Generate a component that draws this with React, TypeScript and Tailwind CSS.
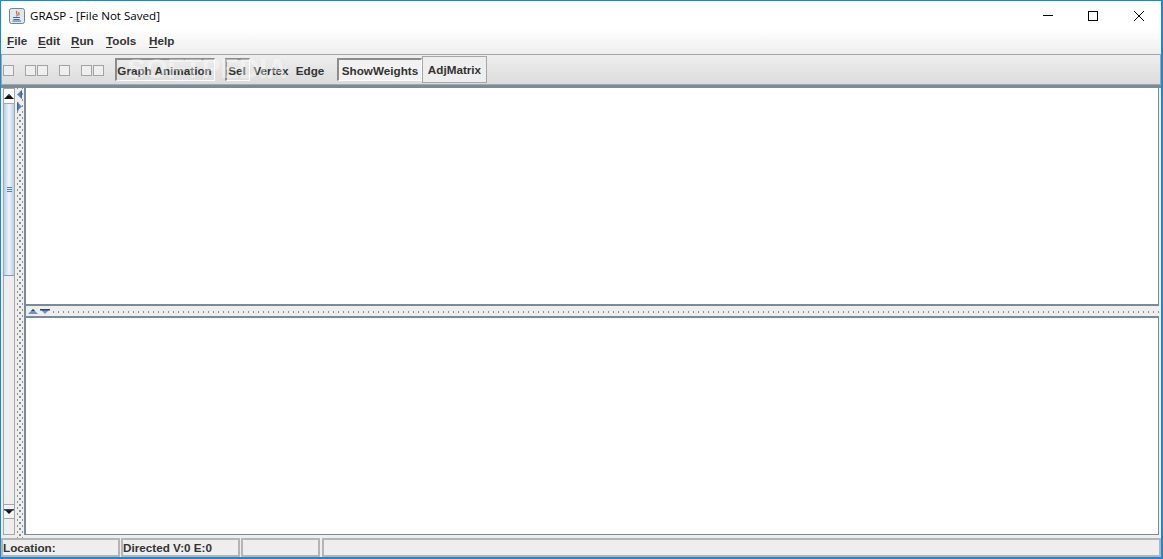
import React from "react";

const font = { fontFamily: '"Liberation Sans", Arial, sans-serif' };

function Box({ className = "" }: { className?: string }) {
  return <div className={"w-[11px] h-[11px] border border-[#a3a3a3] bg-[#efefef] " + className} />;
}

function Menu({ u, rest, className = "" }: { u: string; rest: string; className?: string }) {
  return (
    <span className={"text-[11.7px] font-bold text-[#333333] leading-none " + className}>
      <span className="underline underline-offset-2">{u}</span>
      {rest}
    </span>
  );
}

function Flat({ children, className = "" }: { children: React.ReactNode; className?: string }) {
  return (
    <div className={"h-[23px] flex items-center text-[11.7px] font-bold text-[#333333] " + className}>{children}</div>
  );
}

function Pressed({ children, className = "" }: { children: React.ReactNode; className?: string }) {
  return (
    <div
      className={
        "flex items-center justify-center text-[11.7px] font-bold text-[#333333] border-l-2 border-t-2 border-r border-b border-l-[#8c8c8c] border-t-[#8c8c8c] border-r-white border-b-white " +
        className
      }
    >
      {children}
    </div>
  );
}

function Tri({ dir, color }: { dir: "up" | "down" | "left" | "right"; color: string }) {
  const pts = {
    up: "0,5 5,0 10,5",
    down: "0,0 10,0 5,5",
    left: "5,0 5,9 0,4.5",
    right: "0,0 0,9 5,4.5",
  }[dir];
  const horizontal = dir === "up" || dir === "down";
  const w = horizontal ? 10 : 5;
  const h = horizontal ? 5 : 9;
  return (
    <svg width={w} height={h} viewBox={`0 0 ${w} ${h}`} className="block">
      <polygon points={pts} fill={color} />
      {dir === "down" && <rect x="0" y="0" width="10" height="1.5" fill="#2c4468" />}
      {dir === "up" && <polygon points="3,2 5,0 7,2" fill="#2c4468" />}
      {dir === "left" && <polygon points="5,0 5,9 3.5,7.5 3.5,1.5" fill="#2c4468" opacity="0.5" />}
      {dir === "right" && <rect x="0" y="0" width="1.5" height="9" fill="#2c4468" opacity="0.5" />}
    </svg>
  );
}

function Cell({ children, className = "" }: { children?: React.ReactNode; className?: string }) {
  return (
    <div
      className={
        "h-[19px] border-2 border-[#b5b5b5] bg-[#eeeeee] flex items-center pt-px text-[11.7px] font-bold text-[#333333] whitespace-nowrap " +
        className
      }
    >
      {children}
    </div>
  );
}

export default function App() {
  return (
    <div
      style={font}
      className="relative w-[1163px] h-[559px] overflow-hidden border border-[#1a87d9] border-b-2 border-r-2 bg-[#eeeeee] flex flex-col"
    >
      {/* title bar */}
      <div className="h-[29px] shrink-0 bg-white flex items-center pl-[8px]">
        <svg width="16" height="16" viewBox="0 0 16 16" className="block">
          <rect x="0.5" y="0.5" width="15" height="15" rx="2" fill="#dfe7f0" stroke="#6f8399" />
          <path d="M8 3 C6 5 10 6 7.5 8.5 M10 4 C9 5.5 11 6 9.5 7.5" stroke="#d9622b" strokeWidth="1.2" fill="none" />
          <path d="M4 9.5 H11 M4.5 11.5 H10.5 M3.5 13 H12" stroke="#3f6f9f" strokeWidth="1" fill="none" />
        </svg>
        <span
          className="ml-[5px] text-[11.6px] text-black whitespace-nowrap"
          style={{ fontFamily: '"Open Sans", sans-serif' }}
        >
          GRASP - [File Not Saved]
        </span>
        <div className="ml-auto flex items-center">
          <div className="w-[45px] flex justify-end pr-[18px]">
            <div className="w-[10px] h-px bg-black" />
          </div>
          <div className="w-[45px] flex justify-end pr-[18px]">
            <div className="w-[10px] h-[10px] border border-black" />
          </div>
          <div className="w-[45px] flex justify-end pr-[17px]">
            <svg width="10" height="10" viewBox="0 0 10 10" className="block">
              <path d="M0 0 L10 10 M10 0 L0 10" stroke="#000" strokeWidth="1" />
            </svg>
          </div>
        </div>
      </div>

      {/* menu bar */}
      <div className="h-[24px] shrink-0 bg-gradient-to-b from-white to-[#eeeeee] flex items-center pl-[6px] pb-[2px]">
        <Menu u="F" rest="ile" className="w-[31px]" />
        <Menu u="E" rest="dit" className="w-[33px]" />
        <Menu u="R" rest="un" className="w-[35px]" />
        <Menu u="T" rest="ools" className="w-[43px]" />
        <Menu u="H" rest="elp" />
      </div>

      {/* toolbar */}
      <div className="relative h-[31px] shrink-0 bg-gradient-to-b from-[#eeeeee] to-[#dcdcdc] border border-[#a6a6a6] flex items-center">
        <div className="flex items-center ml-[1px] mt-[1px]">
          <Box />
          <Box className="ml-[11px]" />
          <Box className="ml-[1px]" />
          <Box className="ml-[11px]" />
          <Box className="ml-[11px]" />
          <Box className="ml-[1px]" />
        </div>
        <Pressed className="ml-[11px] w-[100px] h-[23px] pt-px pr-[2px]">Graph Animation</Pressed>
        <Pressed className="ml-[10px] w-[25px] h-[23px] pt-px pr-[2px]">Sel</Pressed>
        <Flat className="w-[42px] justify-center pt-[2px]">Vertex</Flat>
        <Flat className="w-[36px] justify-center pt-[2px]">Edge</Flat>
        <Pressed className="ml-[9px] w-[85px] h-[23px] pt-px bg-[#f2f2f2]">ShowWeights</Pressed>
        <div className="w-[65px] h-[27px] flex items-center justify-center pt-px border border-[#a6a6a6] bg-[#eeeeee] text-[11.7px] font-bold text-[#333333]">
          AdjMatrix
        </div>
        <div className="absolute left-[125px] top-[0px] text-[28px] font-bold text-white/40 leading-none pointer-events-none whitespace-nowrap">
          SOFTPEDIA
        </div>
      </div>

      {/* main */}
      <div className="flex-1 min-h-0 flex flex-col">
        <div className="h-[3px] shrink-0 bg-[#7a8a99]" />
        <div className="flex-1 min-h-0 flex">
          {/* vertical scrollbar */}
          <div className="w-[2px] shrink-0" />
          <div className="w-[12px] shrink-0 flex flex-col border border-[#a6a6a6] bg-[#eeeeee] mb-[3px]">
            <div className="h-[15px] shrink-0 flex items-center justify-center border-b border-[#a6a6a6] bg-white">
              <Tri dir="up" color="#111111" />
            </div>
            <div className="h-[172px] shrink-0 flex items-center justify-center border-b border-[#7f9db9] bg-gradient-to-r from-[#b8cfe5] via-[#eef4fa] to-[#b8cfe5]">
              <div className="w-[5px] flex flex-col gap-px">
                <div className="h-px bg-[#4f7fb5]" />
                <div className="h-px bg-[#4f7fb5]" />
                <div className="h-px bg-[#4f7fb5]" />
              </div>
            </div>
            <div className="flex-1" />
            <div className="h-[15px] shrink-0 flex items-center justify-center border-y border-[#a6a6a6] bg-[#f4f4f4]">
              <Tri dir="down" color="#111111" />
            </div>
            <div className="h-[15px] shrink-0" />
          </div>
          {/* left divider */}
          <div className="relative w-[9px] shrink-0">
            <div className="absolute left-[2px] top-0 bottom-0 w-[6px] bg-[radial-gradient(circle,#8f8f8f_0.8px,transparent_1px),radial-gradient(circle,#8f8f8f_0.8px,transparent_1px)] bg-[length:6px_6px] bg-[position:0_0,3px_3px]" />
            <div className="absolute left-[2px] top-[2px] flex flex-col gap-[3px] bg-[#eeeeee]">
              <Tri dir="left" color="#5d86bd" />
              <Tri dir="right" color="#5d86bd" />
            </div>
          </div>
          {/* panels */}
          <div className="flex-1 min-w-0 flex flex-col border-l-2 border-[#7a8a99] mb-[3px]">
            <div className="h-[218px] shrink-0 bg-white border-b-2 border-r border-[#7a8a99]" />
            <div className="relative h-[10px] shrink-0">
              <div className="absolute left-0 right-0 top-[4px] h-[4px] bg-[radial-gradient(circle,#8f8f8f_0.8px,transparent_1px)] bg-[length:5px_4px]" />
              <div className="absolute left-[2px] top-[3px] flex gap-[2px] bg-[#eeeeee]">
                <Tri dir="up" color="#6a94c9" />
                <Tri dir="down" color="#6a94c9" />
              </div>
            </div>
            <div className="h-[2px] shrink-0 bg-[#7a8a99]" />
            <div className="flex-1 min-h-0 bg-white border-b border-r border-[#7a8a99]" />
          </div>
          <div className="w-[2px] shrink-0" />
        </div>
      </div>

      {/* status bar */}
      <div className="h-[19px] shrink-0 flex">
        <Cell className="w-[119px]">Location:</Cell>
        <Cell className="w-[119px] ml-px">Directed V:0 E:0</Cell>
        <Cell className="w-[79px] ml-px" />
        <Cell className="flex-1 ml-[2px]" />
      </div>
    </div>
  );
}
